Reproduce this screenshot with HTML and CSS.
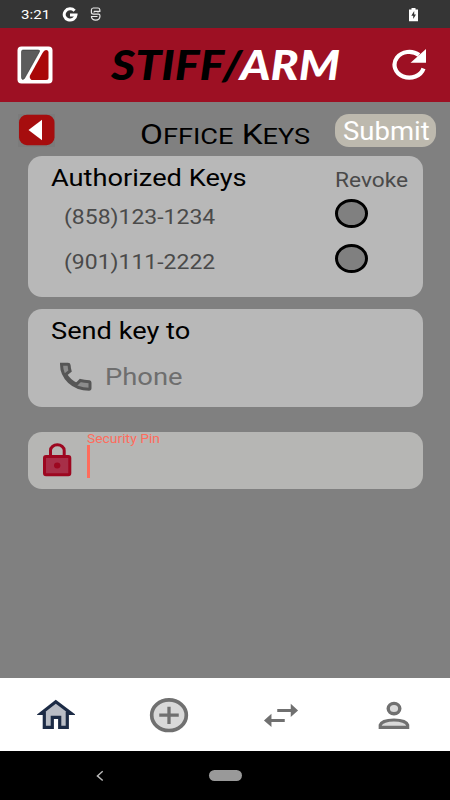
FILE: index.html
```html
<!DOCTYPE html>
<html lang="en">
<head>
<meta charset="utf-8">
<title>Office Keys</title>
<link rel="stylesheet" href="styles.css">
</head>
<body>
<div class="status">
  <span class="clock wide">3:21</span>
  <svg class="google" width="18" height="16" viewBox="61 6 18 16"><path d="M74.6 10.8A5.9 5.6 0 1 0 76 14.9H70" fill="none" stroke="#fff" stroke-width="3"/></svg>
  <svg class="agent" width="14" height="16" viewBox="89 6 14 16" fill="none" stroke="#e8e8e8" stroke-width="1.2"><path d="M99.800 11.200V9.500Q99.500 8 98 8H93.200Q91.500 8 91.400 10V12.300Q91.400 14.200 93.500 14.200H98.500Q100 14.200 100 16C99.800 21.500 91.500 21.500 91.400 16.500"/><path d="M94 11.400H100.400M94 11.400V12.600M98 11.400V12.600M91 16.500H97.500"/></svg>
  <svg class="battery" width="12" height="16" viewBox="408 7 12 16"><path d="M411.500 8H415.500V9.500H418V21.200H409V9.500H411.500Z" fill="#fff"/><path d="M414.200 11L411.300 15.700H413.200V19L416 14.500H414.200Z" fill="#333"/></svg>
</div>
<header class="header">
  <svg width="36" height="38" viewBox="16.500 46 36 38"><rect x="17" y="46.500" width="35" height="37" rx="4" fill="#fff"/><path d="M22.500 50H37.500Q40 50 38.800 52L24 78.500Q21 81 21 77V51.500Q21 50 22.500 50Z" fill="#5c5c5c" stroke="#222" stroke-width=".5"/><path d="M45.500 50Q48 50 48 52.500V77.500Q48 80 45.500 80H31Q28.500 78 29.500 75.500L42 53Q43.700 50 45.500 50Z" fill="#a90808"/></svg>
  <h1 class="brand"><span class="brand-text">STIFF/<b>ARM</b></span></h1>
  <svg width="36" height="34" viewBox="391 49 36 34"><path d="M423.500 69.500A14.800 12.900 0 1 1 419 56" fill="none" stroke="#fff" stroke-width="4.200"/><path d="M426 50V63.700H410.500Z" fill="#fff"/></svg>
</header>
<main class="main">
  <div class="titlebar">
    <svg width="37" height="33" viewBox="18 114 37 33"><rect x="17.500" y="113.500" width="38" height="34" fill="#7b7b7b"/><rect x="19" y="114.700" width="35.500" height="30.500" rx="8" fill="#a60d0e"/><path d="M28.500 130L42 119.800V140.300Z" fill="#fff"/></svg>
    <h2 class="title"><span class="wide">O<small>FFICE</small> K<small>EYS</small></span></h2>
    <button class="submit"><span class="wide">Submit</span></button>
  </div>
  <section class="card keys">
    <div class="row head"><span class="heading wide">Authorized Keys</span><span class="revoke wide">Revoke</span></div>
    <div class="row key"><span class="number wide">(858)123-1234</span><i class="radio"></i></div>
    <div class="row key"><span class="number wide">(901)111-2222</span><i class="radio"></i></div>
  </section>
  <section class="card send">
    <span class="heading wide">Send key to</span>
    <div class="phone">
      <svg width="34" height="30" viewBox="59 362 34 30"><path d="M61.500 364.300H68Q69 364.300 69.100 365.200Q69.300 368.500 70.100 371L65.700 374.500Q69 380.500 76.500 384.300L80.300 380.500Q84 381.500 89.300 381.700Q90 381.800 90 382.700V388Q90 389.200 89 389.200C73 389.200 61.500 378 61.500 364.300Z" fill="#8c8c8c" stroke="#565656" stroke-width="3"/></svg>
      <span class="placeholder wide">Phone</span>
    </div>
  </section>
  <section class="card pin">
    <svg width="30" height="34" viewBox="43 443 30 34"><path d="M50.500 456V450.500A6.800 5.600 0 0 1 64.200 450.500V456" fill="none" stroke="#9d0720" stroke-width="3"/><rect x="44.500" y="456.500" width="25.300" height="18.300" rx="1.500" fill="#a72f48" stroke="#9d0720" stroke-width="3"/><ellipse cx="57.200" cy="465.500" rx="3.200" ry="2.900" fill="#9d0720"/></svg>
    <div class="field"><span class="label wide">Security Pin</span><i class="caret"></i></div>
  </section>
</main>
<nav class="nav">
  <span><svg width="38" height="32" viewBox="37.500 698 38 32"><path d="M56.300 700.800L41.500 712.300H44.800V726.300H52.800V716.300H60.200V726.300H67.800V712.300H71.500Z" fill="#b9bdc5" stroke="#1c2b45" stroke-width="3.200"/></svg></span>
  <span><svg width="40" height="36" viewBox="148.750 696 40 36"><ellipse cx="168.750" cy="714.200" rx="17.300" ry="15.300" fill="#d9d9d9" stroke="#707070" stroke-width="3.700"/><path d="M159 714.200H178.500M168.750 705.700V723" stroke="#707070" stroke-width="3.300"/></svg></span>
  <span><svg width="36" height="28" viewBox="263.250 700 36 28"><path d="M277.500 709.400H292M271 719.400H285" stroke="#707070" stroke-width="3"/><path d="M291 702.700V716L298.300 709.400ZM271.700 712.800V726L264.200 719.400Z" fill="#707070"/></svg></span>
  <span><svg width="34" height="30" viewBox="376.750 699 34 30"><ellipse cx="393.750" cy="707.600" rx="5.800" ry="5.200" fill="#d9d9d9" stroke="#707070" stroke-width="3.400"/><path d="M380 726.300V724C382 717.300 405.500 717.300 407.400 724V726.300Z" fill="#d9d9d9" stroke="#707070" stroke-width="3.200"/></svg></span>
</nav>
<footer class="system">
  <svg width="12" height="12" viewBox="94 770 12 12"><path d="M102.700 771.300L97.400 775.900L102.700 780.500" fill="none" stroke="#bbb" stroke-width="1.400"/></svg>
  <i class="pill"></i>
</footer>
</body>
</html>
```

FILE: styles.css
```css
* { box-sizing: border-box; }
body { margin: 0; width: 450px; height: 800px; display: flex; flex-direction: column; background: #808080; font-family: Roboto, sans-serif; overflow: hidden; }
svg { display: block; flex: none; }
h1, h2 { margin: 0; font-weight: 400; }
i { font-style: normal; }
.wide { display: inline-block; white-space: nowrap; transform: scaleX(1.12); transform-origin: 0 50%; }

.status { height: 28px; background: #353535; color: #fff; display: flex; align-items: center; padding: 0 30px 0 21px; }
.clock { width: 40px; font-size: 13.500px; font-weight: 400; line-height: 28px; }
.agent { margin-left: 10px; }
.battery { margin-left: auto; margin-top: 1px; }

.header { height: 74px; background: #9d1023; display: flex; align-items: center; padding: 0 23px 0 16.500px; }
.brand { flex: 1; padding-left: 58px; font-family: Lato, sans-serif; font-style: italic; font-weight: 900; font-size: 41px; line-height: 74px; color: #000; }
.brand-text { display: inline-block; white-space: nowrap; transform: scaleX(1.135); transform-origin: 0 50%; }
.brand b { color: #fff; font-weight: 900; }

.main { height: 576px; background: #808080; padding: 12px 27.500px 0; }
.titlebar { display: flex; height: 33px; margin: 0 -14px 9px -9.500px; align-items: center; }
.title { width: 195px; margin-left: 84.500px; padding-top: 10px; font-size: 28px; line-height: 40px; color: #000; }
.title .wide { transform: scaleX(1.19); }
.title small { font-size: 22.800px; }
.submit { width: 101px; height: 33px; padding: 0 0 0 8px; border: 0; border-radius: 14px; background: #bdb9ae; color: #fff; font: 400 25px/36px Roboto, sans-serif; text-align: left; }
.submit .wide { transform: scaleX(1.1); }

.card { background: #b8b8b8; border-radius: 14px; }
.row { display: flex; justify-content: space-between; }
.keys { height: 141px; padding: 0 14.500px 0 23px; }
.head { height: 35px; }
.heading { font-size: 24.300px; line-height: 43px; color: #000; }
.revoke { width: 66px; margin-right: 7px; font-size: 20.300px; line-height: 49px; color: #4a4a4a; }
.key { height: 45px; padding-left: 13px; align-items: center; }
.number { padding-top: 7px; font-size: 20.300px; line-height: 45px; color: #4a4a4a; transform: scaleX(1.132); }
.radio { width: 33px; height: 29px; margin-right: 40.500px; border: 3px solid #000; border-radius: 50%; background: #808080; }

.send { height: 98px; margin-top: 12px; padding-left: 23px; }
.send .heading { display: block; }
.phone { display: flex; align-items: center; height: 50px; padding-left: 8.500px; }
.placeholder { margin-left: 12px; font-size: 24px; color: #6e6e6e; transform: scaleX(1.14); }

.pin { height: 57px; margin-top: 24.500px; padding-left: 15.500px; display: flex; align-items: center; background: #b6b6b4; }
.field { display: flex; flex-direction: column; height: 57px; margin-left: 14px; }
.label { font-size: 12.400px; line-height: 14px; color: #ff6c5c; }
.caret { width: 2.500px; height: 33px; margin-top: -1px; background: #ff6c5c; }

.nav { height: 73px; background: #fff; display: grid; grid-template-columns: repeat(4, 1fr); }
.nav span { display: flex; align-items: center; justify-content: center; }
.system { height: 49px; background: #000; display: flex; align-items: center; padding-left: 94px; }
.pill { width: 33px; height: 11px; margin-left: 103px; border-radius: 6px; background: #999; }
```
